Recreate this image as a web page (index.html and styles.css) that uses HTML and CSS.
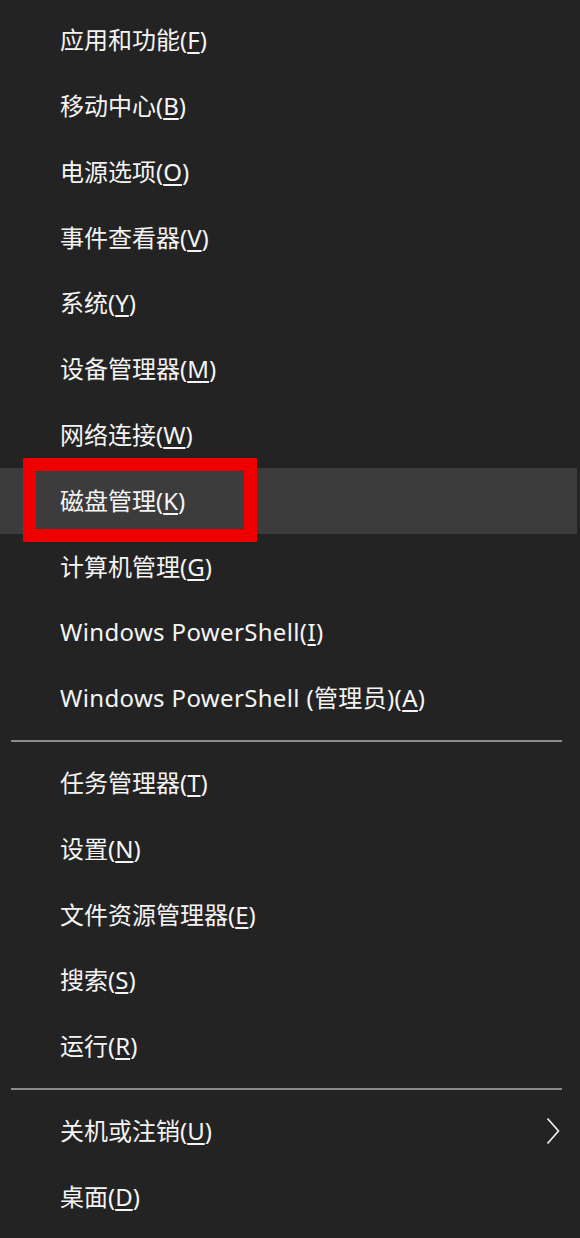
FILE: index.html
```html
<!DOCTYPE html>
<html lang="zh-CN">
<head>
<meta charset="utf-8">
<title>Win+X 菜单</title>
<link rel="stylesheet" href="styles.css">
</head>
<body>
<div class="menu">
  <div class="group">
    <div class="item">应用和功能(<u>F</u>)</div>
    <div class="item">移动中心(<u>B</u>)</div>
    <div class="item">电源选项(<u>O</u>)</div>
    <div class="item">事件查看器(<u>V</u>)</div>
    <div class="item">系统(<u>Y</u>)</div>
    <div class="item">设备管理器(<u>M</u>)</div>
    <div class="item">网络连接(<u>W</u>)</div>
    <div class="item item-hover">磁盘管理(<u>K</u>)<span class="mark"></span></div>
    <div class="item">计算机管理(<u>G</u>)</div>
    <div class="item latin">Windows PowerShell(<u>I</u>)</div>
    <div class="item latin">Windows PowerShell (管理员)(<u>A</u>)</div>
  </div>
  <div class="sep"></div>
  <div class="group">
    <div class="item">任务管理器(<u>T</u>)</div>
    <div class="item">设置(<u>N</u>)</div>
    <div class="item">文件资源管理器(<u>E</u>)</div>
    <div class="item">搜索(<u>S</u>)</div>
    <div class="item">运行(<u>R</u>)</div>
  </div>
  <div class="sep"></div>
  <div class="group">
    <div class="item item-sub"><span>关机或注销(<u>U</u>)</span>
      <svg class="chev" width="14" height="28" viewBox="0 0 14 28"><polyline points="1.5,1.5 12.5,14 1.5,26.5" fill="none" stroke="#eeeeee" stroke-width="1.7"/></svg>
    </div>
    <div class="item">桌面(<u>D</u>)</div>
  </div>
</div>
</body>
</html>
```

FILE: styles.css
```css
html, body {
  margin: 0;
  padding: 0;
  background: #232323;
}
.menu {
  width: 580px;
  height: 1238px;
  box-sizing: border-box;
  padding-top: 7.4px;
  background: #232323;
  color: #f4f4f4;
  font-family: "Noto Sans", "Noto Sans CJK SC", sans-serif;
  font-size: 24px;
  overflow: hidden;
}
.group {
  display: flex;
  flex-direction: column;
}
.item {
  position: relative;
  height: 65.8px;
  display: flex;
  align-items: center;
  padding-left: 60px;
  margin-right: 3px;
  white-space: nowrap;
  line-height: 1;
}
.latin {
  letter-spacing: 0.35px;
}
.item u {
  text-decoration: underline;
  text-decoration-thickness: 1.5px;
  text-underline-offset: 3px;
}
.item-hover {
  background: #3c3c3c;
}
.mark {
  position: absolute;
  left: 23px;
  top: -10px;
  width: 234px;
  height: 84px;
  box-sizing: border-box;
  border: 13px solid #ee0000;
}
.item-sub {
  justify-content: space-between;
  padding-right: 17px;
}
.chev {
  display: block;
}
.sep {
  height: 19px;
  display: flex;
  align-items: center;
  padding: 0 18px 0 11px;
}
.sep::before {
  content: "";
  flex: 1;
  height: 2px;
  background: #8a8a8a;
}
```
